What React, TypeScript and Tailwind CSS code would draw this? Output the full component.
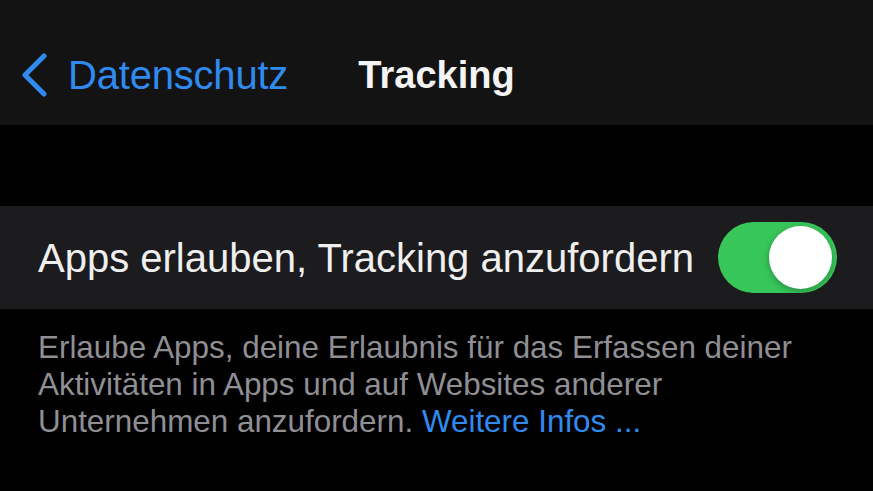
export default function App() {
  return (
    <div className="w-[873px] h-[491px] bg-black overflow-hidden" style={{ fontFamily: '"Liberation Sans", Arial, sans-serif' }}>
      <header className="h-[125px] bg-[#131313] grid grid-cols-[1fr_auto_1fr] items-center pt-[24px]">
        <button className="flex items-center gap-[20px] pl-[20px] text-[#2f8bef] text-[40px] leading-none">
          <svg width="28" height="44" viewBox="0 0 28 44" fill="none">
            <path d="M24 3 L5 22 L24 41" stroke="#2f8bef" strokeWidth="5" strokeLinecap="round" strokeLinejoin="round" />
          </svg>
          <span className="tracking-[-0.2px]">Datenschutz</span>
        </button>
        <h1 className="text-[38px] font-bold text-[#f4f4f4] leading-none">Tracking</h1>
        <div />
      </header>

      <div className="h-[81px]" />

      <div className="h-[103px] bg-[#1c1c1e] flex items-center justify-between pl-[38px] pr-[36px]">
        <span className="text-[40px] text-[#efefef] leading-none whitespace-nowrap">
          Apps erlauben, Tracking anzufordern
        </span>
        <div className="w-[119px] h-[71px] rounded-full bg-[#37c65a] flex items-center justify-end pr-[5px]">
          <div className="w-[63px] h-[63px] rounded-full bg-white shadow-[0_2px_6px_rgba(0,0,0,0.3)]" />
        </div>
      </div>

      <p className="px-[38px] pt-[20px] text-[31.4px] leading-[37px] text-[#8f8f94]">
        <span className="block whitespace-nowrap">Erlaube Apps, deine Erlaubnis für das Erfassen deiner</span>
        <span className="block whitespace-nowrap">Aktivitäten in Apps und auf Websites anderer</span>
        <span className="block whitespace-nowrap">
          Unternehmen anzufordern. <span className="text-[#2f8bef]">Weitere Infos ...</span>
        </span>
      </p>
    </div>
  )
}
